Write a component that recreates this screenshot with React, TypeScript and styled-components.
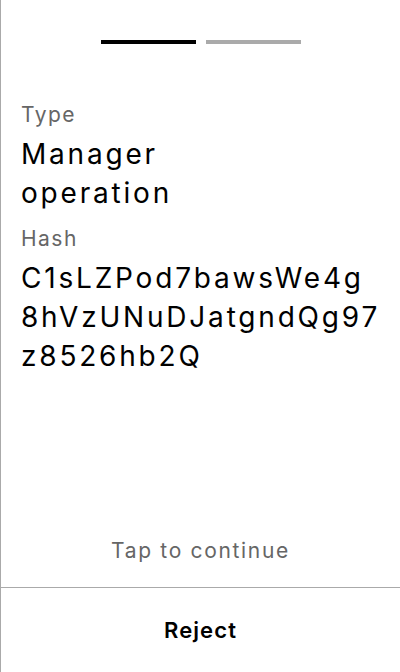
import React from "react";
import styled, { createGlobalStyle } from "styled-components";

const Global = createGlobalStyle`
  html, body { margin: 0; padding: 0; background: #fff; }
  body { font-family: Inter, "Noto Sans", sans-serif; }
  * { box-sizing: border-box; }
`;

const Screen = styled.div`
  width: 400px;
  height: 672px;
  border-left: 1px solid #aaa;
  display: flex;
  flex-direction: column;
  background: #fff;
  color: #000;
`;

const Progress = styled.div`
  display: flex;
  justify-content: center;
  gap: 10px;
  padding-top: 40px;
`;

const Segment = styled.div<{ $active?: boolean }>`
  width: 95px;
  height: 4px;
  background: ${(p) => (p.$active ? "#000" : "#aaa")};
`;

const Body = styled.div`
  flex: 1;
  display: flex;
  flex-direction: column;
  padding: 56px 4px 0 20px;
`;

const Label = styled.div`
  font-size: 21px;
  line-height: 30px;
  letter-spacing: 0.07em;
  color: #666;
  margin-bottom: 5px;
`;

const Value = styled.div<{ $narrow?: boolean }>`
  font-size: 28px;
  line-height: 39px;
  letter-spacing: 0.1em;
  color: #000;
  max-width: ${(p) => (p.$narrow ? "200px" : "none")};
  overflow-wrap: anywhere;
  margin-bottom: ${(p) => (p.$narrow ? "11px" : "0")};
`;

const Spacer = styled.div`
  flex: 1;
`;

const Hint = styled.div`
  text-align: center;
  font-size: 21px;
  line-height: 30px;
  letter-spacing: 0.08em;
  color: #666;
  padding-bottom: 21px;
  margin-left: -20px;
  margin-right: -4px;
`;

const Footer = styled.button`
  all: unset;
  display: flex;
  align-items: center;
  justify-content: center;
  height: 84px;
  border-top: 1px solid #aaa;
  font-family: Inter, "Noto Sans", sans-serif;
  font-size: 22px;
  font-weight: 600;
  letter-spacing: 0.05em;
  color: #000;
  cursor: pointer;
`;

export default function App() {
  return (
    <>
      <Global />
      <Screen>
        <Progress>
          <Segment $active />
          <Segment />
        </Progress>
        <Body>
          <Label>Type</Label>
          <Value $narrow>Manager operation</Value>
          <Label>Hash</Label>
          <Value>
            C1sLZPod7bawsWe4g<wbr />8hVzUNuDJatgndQg97<wbr />z8526hb2Q
          </Value>
          <Spacer />
          <Hint>Tap to continue</Hint>
        </Body>
        <Footer>Reject</Footer>
      </Screen>
    </>
  );
}
